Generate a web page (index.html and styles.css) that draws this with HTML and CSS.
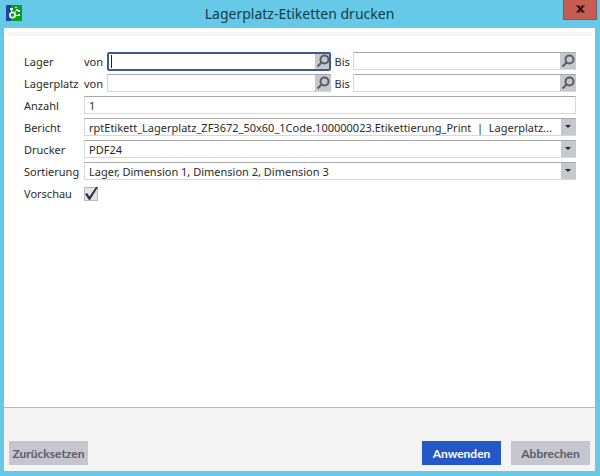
FILE: index.html
```html
<!DOCTYPE html>
<html lang="de">
<head>
    <meta charset="UTF-8">
    <meta name="viewport" content="width=device-width, initial-scale=1.0">
    <title>Lagerplatz-Etiketten drucken</title>
    <link rel="stylesheet" href="styles.css">
</head>
<body>
    <header class="titlebar">
        <svg class="app-icon" viewBox="0 0 16 16" aria-hidden="true">
            <rect width="16" height="16" fill="#08a018"/>
            <path d="M0 0h5v16H0z" fill="#1c4597"/>
            <circle cx="6.500" cy="10" r="2.700" fill="none" stroke="#e8f8ec" stroke-width="1.700"/>
            <path d="M5.500 4v3M8.500 8l2-3M9 10.500h4" stroke="#e8f8ec" stroke-width="1"/>
            <path d="M4 3h3v2H4zM10 4h2v2h-2zM9 2h2v1H9zM12 5h2v2h-2zM12 9h2v2h-2z" fill="#e8f8ec"/>
        </svg>
        <h1>Lagerplatz-Etiketten drucken</h1>
        <button type="button" class="close" aria-label="Schließen">
            <svg viewBox="0 0 10 8" aria-hidden="true"><path d="M0 0h4v1L5 2.500 6 1V0h4v1H9L6.500 4 9 7h1v1H6V7L5 5.500 4 7v1H0V7h1l2.500-3L1 1H0z"/></svg>
        </button>
    </header>

    <form class="dialog">
        <div class="fields">
            <div class="row">
                <span class="label">Lager</span>
                <label class="range-label" for="lagerVon">von</label>
                <div class="search focused">
                    <input type="text" id="lagerVon" autofocus>
                    <button type="button" aria-label="Lager suchen">
                        <svg viewBox="0 0 14 14"><circle cx="8.500" cy="5.500" r="4"/><path d="M5.500 8.500L1.500 12.500"/></svg>
                    </button>
                </div>
                <label class="range-label to" for="lagerBis">Bis</label>
                <div class="search">
                    <input type="text" id="lagerBis">
                    <button type="button" aria-label="Lager suchen">
                        <svg viewBox="0 0 14 14"><circle cx="8.500" cy="5.500" r="4"/><path d="M5.500 8.500L1.500 12.500"/></svg>
                    </button>
                </div>
            </div>
            <div class="row">
                <span class="label">Lagerplatz</span>
                <label class="range-label" for="platzVon">von</label>
                <div class="search">
                    <input type="text" id="platzVon">
                    <button type="button" aria-label="Lagerplatz suchen">
                        <svg viewBox="0 0 14 14"><circle cx="8.500" cy="5.500" r="4"/><path d="M5.500 8.500L1.500 12.500"/></svg>
                    </button>
                </div>
                <label class="range-label to" for="platzBis">Bis</label>
                <div class="search">
                    <input type="text" id="platzBis">
                    <button type="button" aria-label="Lagerplatz suchen">
                        <svg viewBox="0 0 14 14"><circle cx="8.500" cy="5.500" r="4"/><path d="M5.500 8.500L1.500 12.500"/></svg>
                    </button>
                </div>
            </div>
            <div class="row">
                <label class="label" for="anzahl">Anzahl</label>
                <input type="text" class="text-field" id="anzahl" value="1">
            </div>
            <div class="row">
                <label class="label" for="bericht">Bericht</label>
                <div class="dropdown">
                    <select id="bericht">
                        <option>rptEtikett_Lagerplatz_ZF3672_50x60_1Code.100000023.Etikettierung_Print &nbsp;|&nbsp; Lagerplatz...</option>
                    </select>
                </div>
            </div>
            <div class="row">
                <label class="label" for="drucker">Drucker</label>
                <div class="dropdown">
                    <select id="drucker">
                        <option>PDF24</option>
                    </select>
                </div>
            </div>
            <div class="row">
                <label class="label" for="sortierung">Sortierung</label>
                <div class="dropdown">
                    <select id="sortierung">
                        <option>Lager, Dimension 1, Dimension 2, Dimension 3</option>
                    </select>
                </div>
            </div>
            <div class="row">
                <label class="label" for="vorschau">Vorschau</label>
                <div class="check">
                    <input type="checkbox" id="vorschau" checked>
                    <svg viewBox="0 0 14 14" aria-hidden="true"><path d="M1 7l2-1 2.500 3.500L12 0l2 0L6 13H5z"/></svg>
                </div>
            </div>
        </div>

        <footer class="actions">
            <button type="reset">Zurücksetzen</button>
            <button type="submit" class="primary">Anwenden</button>
            <button type="button">Abbrechen</button>
        </footer>
    </form>
</body>
</html>
```
FILE: styles.css
```css
* {
    box-sizing: border-box;
}
body {
    display: flex;
    flex-direction: column;
    min-height: 100vh;
    margin: 0;
    padding: 0 5px 5px 4px;
    background: #67c9e8;
    font-family: "Noto Sans", "Open Sans", sans-serif;
    font-size: 11px;
    color: #2b2b2b;
}
button,
input,
select {
    margin: 0;
    font: inherit;
    color: inherit;
}
.titlebar {
    position: relative;
    display: flex;
    align-items: center;
    justify-content: center;
    height: 28px;
}
.titlebar h1 {
    margin: 0;
    font-size: 14px;
    font-weight: normal;
    line-height: 28px;
    color: #123c4b;
}
.app-icon {
    position: absolute;
    left: 2px;
    top: 5px;
    width: 16px;
    height: 16px;
}
.close {
    position: absolute;
    right: -2px;
    top: 0;
    display: flex;
    align-items: center;
    justify-content: center;
    width: 34px;
    height: 20px;
    padding: 0 0 2px;
    background: #c75c50;
    border: 1px solid #74596a;
    border-top: none;
}
.close svg {
    width: 9px;
    height: 8px;
    fill: #111;
}
.dialog {
    flex: 1;
    display: flex;
    flex-direction: column;
    background: #fff;
}
.dialog::before {
    content: "";
    height: 4px;
    margin: 4px 3px 0;
    background: #f5f5f8;
}
.fields {
    flex: 1;
    display: flex;
    flex-direction: column;
    gap: 4px;
    padding: 16px 19px 20px 20px;
}
.row {
    display: flex;
    height: 18px;
}
.label,
.range-label {
    flex: none;
    line-height: 20px;
}
.label {
    width: 60px;
}
.range-label {
    width: 23px;
}
.range-label.to {
    width: 22px;
    padding-left: 4px;
}
.search,
.text-field,
.dropdown {
    flex: 1;
    min-width: 0;
    border: 1px solid #d8d8dc;
    border-top-color: #a9a9ad;
    background: #fff;
}
.text-field {
    padding: 1px 4px 0;
}
.search {
    position: relative;
    display: flex;
    border-right: none;
}
.search input {
    flex: 1;
    min-width: 0;
    padding: 0 4px;
    border: none;
    outline: none;
    background: none;
}
.search button {
    width: 16px;
    padding: 1px;
    border: none;
    background: #c7c7ce;
}
.search svg {
    display: block;
    width: 14px;
    height: 14px;
    fill: none;
    stroke: #5c5c68;
    stroke-width: 2;
}
.focused {
    border-color: transparent;
}
/* focus ring and text cursor */
.focused::before {
    content: "";
    position: absolute;
    inset: -1px 0 -2px -1px;
    border: 2px solid #3c5c88;
    border-radius: 2px;
    pointer-events: none;
}
.focused::after {
    content: "";
    position: absolute;
    left: 3px;
    top: 2px;
    bottom: 1px;
    width: 1px;
    background: #222;
}
.focused input {
    caret-color: transparent;
}
.dropdown {
    position: relative;
    border-right: none;
}
.dropdown select {
    display: block;
    width: 100%;
    height: 16px;
    padding: 1px 16px 0 4px;
    border: none;
    outline: none;
    background: none;
    appearance: none;
}
.dropdown::before {
    content: "";
    position: absolute;
    right: 0;
    top: 0;
    width: 15px;
    height: 16px;
    background: #c7c7ce;
}
.dropdown::after {
    content: "";
    position: absolute;
    right: 5px;
    top: 6px;
    border: 3px solid transparent;
    border-top-color: #222;
    border-bottom: none;
}
.check {
    position: relative;
    width: 14px;
    height: 14px;
    margin-top: 3px;
}
.check input {
    display: block;
    width: 14px;
    height: 14px;
    appearance: none;
    background: #e3e3ea;
    border: 1px solid #b9b9c1;
}
.check svg {
    position: absolute;
    left: 0;
    top: 0;
    width: 14px;
    height: 14px;
    fill: #303038;
    pointer-events: none;
    visibility: hidden;
}
.check input:checked + svg {
    visibility: visible;
}
.actions {
    display: flex;
    gap: 10px;
    padding: 33px 5px 6px;
    border-top: 1px solid #b4b8b8;
    background: #f4f4f4;
}
.actions button {
    width: 79px;
    height: 24px;
    padding: 0;
    border: none;
    background: #c5c6cf;
    font-family: Lato, "Noto Sans", sans-serif;
    font-size: 12px;
    font-weight: 700;
    color: #5b5c69;
}
.actions button:first-child {
    margin-right: auto;
}
.actions .primary {
    background: #2458c8;
    color: #fff;
}
```
